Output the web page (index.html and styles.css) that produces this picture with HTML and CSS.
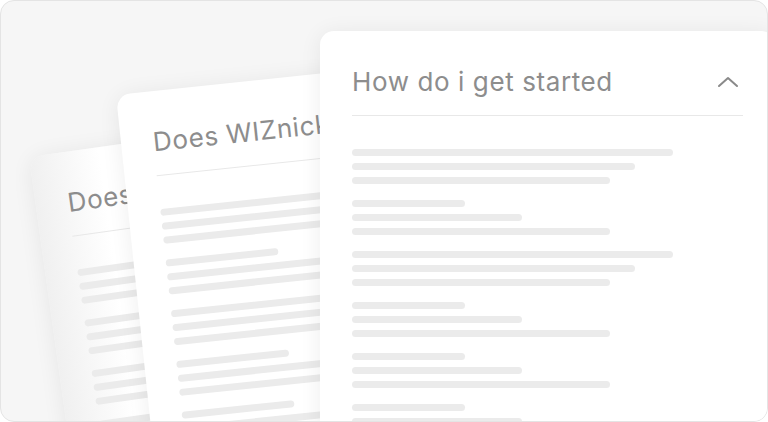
FILE: index.html
```html
<!DOCTYPE html>
<html lang="en">
<head>
<meta charset="utf-8">
<title>FAQ cards</title>
<link rel="stylesheet" href="styles.css">
</head>
<body>
<div class="frame">
  <div class="card card-back">
    <div class="card-head"><span class="card-title">Does WIZnick work offline</span></div>
    <div class="lines">
      <div class="group"><i class="bar w1"></i><i class="bar w2"></i><i class="bar w3"></i></div>
      <div class="group"><i class="bar w1"></i><i class="bar w2"></i><i class="bar w3"></i></div>
      <div class="group"><i class="bar w1"></i><i class="bar w2"></i><i class="bar w3"></i></div>
      <div class="group"><i class="bar w1"></i><i class="bar w2"></i><i class="bar w3"></i></div>
      <div class="group"><i class="bar w1"></i><i class="bar w2"></i><i class="bar w3"></i></div>
    </div>
  </div>
  <div class="card card-mid">
    <div class="card-head"><span class="card-title">Does WIZnick cost anything</span></div>
    <div class="lines">
      <div class="group"><i class="bar w1"></i><i class="bar w2"></i><i class="bar w3"></i></div>
      <div class="group"><i class="bar s1"></i><i class="bar s2"></i><i class="bar w3"></i></div>
      <div class="group"><i class="bar w1"></i><i class="bar w2"></i><i class="bar w3"></i></div>
      <div class="group"><i class="bar s1"></i><i class="bar s2"></i><i class="bar w3"></i></div>
      <div class="group"><i class="bar s1"></i><i class="bar s2"></i><i class="bar w3"></i></div>
      <div class="group"><i class="bar s1"></i><i class="bar s2"></i><i class="bar w3"></i></div>
    </div>
  </div>
  <div class="card card-front">
    <div class="card-head">
      <span class="card-title">How do i get started</span>
      <svg class="chev" width="24" height="24" viewBox="0 0 24 24" aria-hidden="true"><path d="M3 16 L12 8 L21 16" fill="none" stroke="#8a8a8a" stroke-width="2" stroke-linecap="round" stroke-linejoin="round"/></svg>
    </div>
    <div class="lines">
      <div class="group"><i class="bar w1"></i><i class="bar w2"></i><i class="bar w3"></i></div>
      <div class="group"><i class="bar s1"></i><i class="bar s2"></i><i class="bar w3"></i></div>
      <div class="group"><i class="bar w1"></i><i class="bar w2"></i><i class="bar w3"></i></div>
      <div class="group"><i class="bar s1"></i><i class="bar s2"></i><i class="bar w3"></i></div>
      <div class="group"><i class="bar s1"></i><i class="bar s2"></i><i class="bar w3"></i></div>
      <div class="group"><i class="bar s1"></i><i class="bar s2"></i><i class="bar w3"></i></div>
    </div>
  </div>
</div>
</body>
</html>
```
FILE: styles.css
```css
html, body {
  margin: 0;
  padding: 0;
  background: #ffffff;
}

.frame {
  position: relative;
  box-sizing: border-box;
  width: 768px;
  height: 422px;
  border: 1px solid #e4e4e4;
  border-radius: 14px;
  background: #f6f6f6;
  overflow: hidden;
  padding: 30px 0 0 319px;
  font-family: Inter, "Liberation Sans", sans-serif;
}

.card {
  box-sizing: border-box;
  width: 455px;
  height: 430px;
  padding: 35px 32px 0 32px;
  background: #ffffff;
  border-radius: 14px;
  box-shadow: 0 2px 22px rgba(0, 0, 0, 0.07);
  white-space: nowrap;
  overflow: hidden;
}

.card-back,
.card-mid {
  position: absolute;
  transform-origin: 0 0;
}

.card-back {
  left: 28px;
  top: 156px;
  transform: rotate(-8deg);
  background: linear-gradient(90deg, #f0f0f0 0, #ffffff 70px);
}

.card-mid {
  left: 115px;
  top: 94px;
  transform: rotate(-6deg);
}

.card-front {
  position: relative;
}

.card-head {
  display: flex;
  align-items: center;
  justify-content: space-between;
  height: 32px;
  padding-bottom: 17px;
  border-bottom: 1px solid #e8e8e8;
}

.card-title {
  font-size: 26px;
  line-height: 32px;
  color: #8d8d8d;
  letter-spacing: 0.6px;
}

.chev {
  display: block;
  margin-right: 3px;
}

.lines {
  display: flex;
  flex-direction: column;
  gap: 16px;
  padding-top: 33px;
}

.group {
  display: flex;
  flex-direction: column;
  gap: 7px;
}

.bar {
  display: block;
  height: 7px;
  border-radius: 4px;
  background: #ebebeb;
}

.w1 { width: 321px; }
.w2 { width: 283px; }
.w3 { width: 258px; }
.s1 { width: 113px; }
.s2 { width: 170px; }
```
